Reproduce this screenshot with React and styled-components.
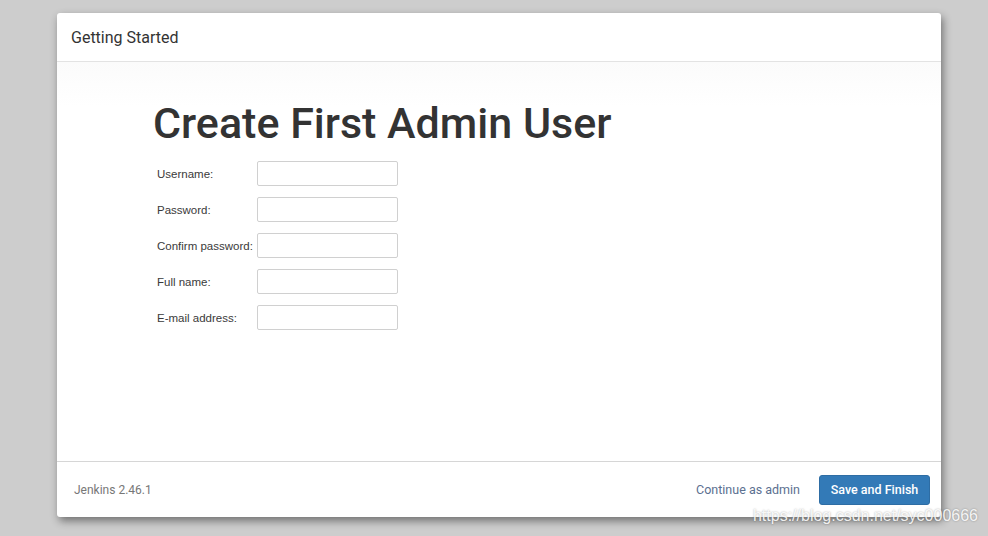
import React from 'react'
import styled, { createGlobalStyle } from 'styled-components'

const GlobalStyle = createGlobalStyle`
    html, body {
        margin: 0;
        padding: 0;
        background-color: #cdcdcd;
        font-family: "Liberation Sans", Arial, sans-serif;
    }
`

const Page = styled.div`
    position: relative;
    width: 988px;
    height: 536px;
    padding: 13px 0 0 57px;
    box-sizing: border-box;
    overflow: hidden;
`

const Dialog = styled.div`
    width: 884px;
    height: 504px;
    background-color: #fff;
    border-radius: 3px;
    box-shadow: 2px 4px 9px rgba(0, 0, 0, 0.45);
    display: flex;
    flex-direction: column;
`

const Header = styled.div`
    height: 48px;
    flex: none;
    border-bottom: 1px solid #e3e3e3;
    display: flex;
    align-items: center;
    padding: 0 14px;
    font-family: Roboto, "Liberation Sans", sans-serif;
    font-size: 16px;
    color: #333;
`

const Body = styled.div`
    flex: 1;
    padding: 37px 0 0 97px;
    background: linear-gradient(180deg, #fbfbfb 0px, #fff 45px);
`

const Title = styled.h1`
    margin: 0 0 14px -1px;
    font-family: Roboto, "Liberation Sans", sans-serif;
    font-weight: 500;
    font-size: 43px;
    line-height: 48px;
    color: #333;
`

const Form = styled.div`
    display: grid;
    grid-template-columns: 100px 141px;
    row-gap: 11px;
    padding-left: 3px;
    align-items: center;
`

const Label = styled.label`
    font-size: 11.5px;
    white-space: nowrap;
    color: #3a3a3a;
`

const Input = styled.input`
    box-sizing: border-box;
    width: 141px;
    height: 25px;
    border: 1px solid #d0d0d0;
    border-radius: 2px;
    background: #fff;
`

const Footer = styled.div`
    height: 55px;
    flex: none;
    border-top: 1px solid #d6d6d6;
    display: flex;
    align-items: center;
    padding: 0 11px 0 17px;
`

const Version = styled.span`
    font-family: Roboto, "Liberation Sans", sans-serif;
    font-size: 12px;
    color: #777;
`

const Actions = styled.div`
    margin-left: auto;
    display: flex;
    align-items: center;
    gap: 19px;
`

const LinkButton = styled.a`
    font-family: Roboto, "Liberation Sans", sans-serif;
    font-size: 12.5px;
    color: #5b7090;
    text-decoration: none;
`

const PrimaryButton = styled.button`
    width: 111px;
    height: 30px;
    border: 1px solid #2e6da4;
    border-radius: 3px;
    background-color: #337ab7;
    color: #fff;
    font-family: Roboto, "Liberation Sans", sans-serif;
    font-size: 12.5px;
    font-weight: 500;
`

const Watermark = styled.div`
    position: absolute;
    right: 10px;
    bottom: 11px;
    font-family: "Liberation Sans", Arial, sans-serif;
    font-size: 16px;
    color: rgba(255, 255, 255, 0.9);
    text-shadow: 0 0 2px rgba(0, 0, 0, 0.35);
`

const fields = ['Username:', 'Password:', 'Confirm password:', 'Full name:', 'E-mail address:']

export default function App() {
    return (
        <>
            <GlobalStyle />
            <Page>
                <Dialog>
                    <Header>Getting Started</Header>
                    <Body>
                        <Title>Create First Admin User</Title>
                        <Form>
                            {fields.map((f) => (
                                <React.Fragment key={f}>
                                    <Label>{f}</Label>
                                    <Input type={f === 'Password:' || f === 'Confirm password:' ? 'password' : 'text'} />
                                </React.Fragment>
                            ))}
                        </Form>
                    </Body>
                    <Footer>
                        <Version>Jenkins 2.46.1</Version>
                        <Actions>
                            <LinkButton href="#">Continue as admin</LinkButton>
                            <PrimaryButton>Save and Finish</PrimaryButton>
                        </Actions>
                    </Footer>
                </Dialog>
                <Watermark>https://blog.csdn.net/syc000666</Watermark>
            </Page>
        </>
    )
}
